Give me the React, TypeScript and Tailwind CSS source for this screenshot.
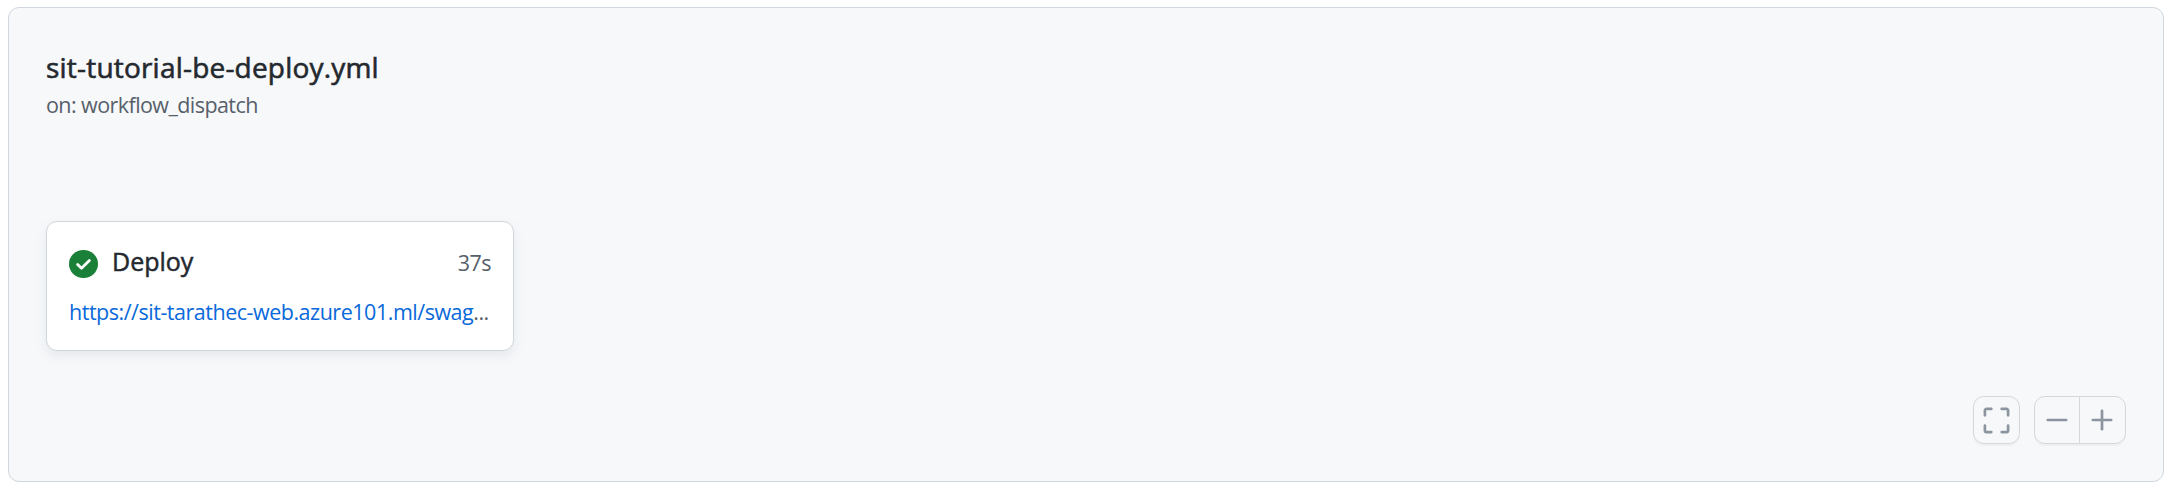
function CheckIcon() {
  return (
    <svg className="h-7 w-[29px] shrink-0" viewBox="0 0 16 16" preserveAspectRatio="none" aria-hidden="true">
      <circle cx="8" cy="8" r="8" fill="#1a7f37" />
      <path d="M4.75 8.3 6.9 10.4 11.25 6" fill="none" stroke="#fff" strokeWidth="1.55" strokeLinecap="round" strokeLinejoin="round" />
    </svg>
  );
}

function FitIcon() {
  return (
    <svg className="size-[27px]" viewBox="0 0 27 27" fill="none" stroke="#8c959f" strokeWidth="2.7" strokeLinecap="round" strokeLinejoin="round" aria-hidden="true">
      <path d="M1.9 8.3V3.5a1.6 1.6 0 0 1 1.6-1.6h4.8M18.7 1.9h4.8a1.6 1.6 0 0 1 1.6 1.6v4.8M25.1 18.7v4.8a1.6 1.6 0 0 1-1.6 1.6h-4.8M8.3 25.1H3.5a1.6 1.6 0 0 1-1.6-1.6v-4.8" />
    </svg>
  );
}

function ZoomIcon({ plus = false }: { plus?: boolean }) {
  return (
    <svg className="size-[22px]" viewBox="0 0 22 22" fill="none" stroke="#8c959f" strokeWidth="2.7" strokeLinecap="round" aria-hidden="true">
      <path d="M1.8 11H20.2" />
      {plus && <path d="M11 1.8V20.2" />}
    </svg>
  );
}

export default function App() {
  return (
    <main className="h-[490px] w-[2174px] bg-white pt-[7px] pl-2 font-['Open_Sans','Noto_Sans',sans-serif]">
      <section className="flex h-[475px] w-[2156px] flex-col rounded-[11px] border border-[#d0d7de] bg-[#f6f8fa] pt-[39px] pr-[37px] pb-[37px] pl-[37px]">
        <h1 className="h-[40px] text-[28px] leading-[40px] tracking-[0.2px] whitespace-nowrap text-[#24292f] [-webkit-text-stroke:0.6px_#24292f]">sit-tutorial-be-deploy.yml</h1>
        <p className="h-[34px] pt-px text-[21.5px] leading-[34px] tracking-[-0.57px] whitespace-nowrap text-[#57606a]">on: workflow_dispatch</p>
        <article className="mt-[100px] h-[130px] w-[468px] rounded-[11px] border border-[#d0d7de] bg-white px-[22px] pt-[22px] shadow-[0_5px_11px_rgba(140,149,159,0.15)]">
          <div className="flex h-[40px] items-center">
            <CheckIcon />
            <span className="ml-[14px] pb-1 text-[25px] text-[#24292f] [-webkit-text-stroke:0.5px_#24292f]">Deploy</span>
            <span className="ml-auto pb-0.5 text-[21.5px] tracking-[-0.5px] text-[#57606a]">37s</span>
          </div>
          <div className="mt-[10px] h-[36px] text-[21.5px] leading-[36px] tracking-[-0.48px] whitespace-nowrap text-[#57606a]">
            <a className="text-[#0969da]">https://sit-tarathec-web.azure101.ml/swag</a>...
          </div>
        </article>
        <div className="mt-auto flex justify-end gap-[14px]">
          <button aria-label="Fit to window" className="flex h-12 w-[47px] items-center justify-center rounded-[11px] border border-[#d5d8db] shadow-[0_2px_0_rgba(27,31,36,0.04)]">
            <FitIcon />
          </button>
          <div className="flex h-12 w-[92px] rounded-[11px] border border-[#d5d8db] shadow-[0_2px_0_rgba(27,31,36,0.04)]">
            <button aria-label="Zoom out" className="flex flex-1 items-center justify-center border-r border-[#d5d8db]">
              <ZoomIcon />
            </button>
            <button aria-label="Zoom in" className="flex flex-1 items-center justify-center pr-px">
              <ZoomIcon plus />
            </button>
          </div>
        </div>
      </section>
    </main>
  );
}
